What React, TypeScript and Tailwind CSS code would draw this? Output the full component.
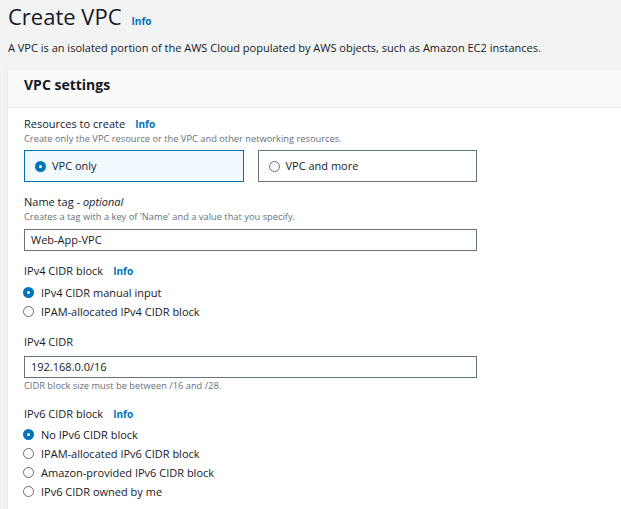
import React from "react";

const font = { fontFamily: '"Open Sans", "Noto Sans", Arial, sans-serif' };

function Info() {
  return <span className="ml-[10px] text-[10px] font-bold text-[#0073bb]">Info</span>;
}

function Radio({ checked }: { checked?: boolean }) {
  return checked ? (
    <span className="inline-block w-[11px] h-[11px] rounded-full border-[4px] border-[#0073bb] bg-white shrink-0" />
  ) : (
    <span className="inline-block w-[11px] h-[11px] rounded-full border border-[#687078] bg-white shrink-0" />
  );
}

function RadioRow({ label, checked }: { label: string; checked?: boolean }) {
  return (
    <div className="flex items-center h-[19px] ml-[-1px]">
      <Radio checked={checked} />
      <span className="ml-[7px] text-[11px] leading-[19px] text-[#16191f]">{label}</span>
    </div>
  );
}

export default function App() {
  return (
    <div style={font} className="w-[621px] h-[509px] overflow-hidden bg-[#f2f3f3] pl-[7px] text-[#16191f]">
      <div className="pl-[1px] pt-[1px] flex items-baseline">
        <h1 className="text-[22px] leading-[30px] font-normal">Create VPC</h1>
        <span className="ml-[10px] text-[10px] font-bold text-[#0073bb]">Info</span>
      </div>
      <p className="pl-[1px] mt-[9px] text-[11px] leading-[16px]">
        A VPC is an isolated portion of the AWS Cloud populated by AWS objects, such as Amazon EC2 instances.
      </p>
      <div className="mt-[13px] w-[700px] border border-[#eaeded] bg-white">
        <div className="h-[38px] bg-[#fafafa] border-b border-[#eaeded] pl-[16px] pt-[5px]">
          <h2 className="text-[14px] font-bold leading-[20px]">VPC settings</h2>
        </div>
        <div className="pl-[16px] pt-[8px] pb-[40px] w-[469px]">
          <div className="text-[11px] leading-[16px] flex items-baseline">
            Resources to create <Info />
          </div>
          <div className="text-[9.3px] leading-[14px] text-[#687078]">
            Create only the VPC resource or the VPC and other networking resources.
          </div>
          <div className="mt-[4px] grid grid-cols-2 gap-[14px]">
            <div className="h-[32px] border border-[#0073bb] bg-[#f1faff] flex items-center pl-[10px]">
              <Radio checked />
              <span className="ml-[6px] text-[11px]">VPC only</span>
            </div>
            <div className="h-[32px] border border-[#687078] bg-white flex items-center pl-[10px]">
              <Radio />
              <span className="ml-[6px] text-[11px]">VPC and more</span>
            </div>
          </div>

          <div className="mt-[12px] text-[11px] leading-[16px]">
            Name tag - <i>optional</i>
          </div>
          <div className="text-[9.3px] leading-[14px] text-[#687078]">
            Creates a tag with a key of 'Name' and a value that you specify.
          </div>
          <div className="mt-[5px] h-[22px] border border-[#687078] flex items-center pl-[6px] text-[11px]">
            Web-App-VPC
          </div>

          <div className="mt-[12px] text-[11px] leading-[16px] flex items-baseline">
            IPv4 CIDR block <Info />
          </div>
          <div className="mt-[4px]">
            <RadioRow label="IPv4 CIDR manual input" checked />
            <RadioRow label="IPAM-allocated IPv4 CIDR block" />
          </div>

          <div className="mt-[13px] text-[11px] leading-[16px]">IPv4 CIDR</div>
          <div className="mt-[6px] h-[22px] border border-[#687078] flex items-center pl-[6px] text-[11px]">
            192.168.0.0/16
          </div>
          <div className="mt-[1px] text-[9.3px] leading-[14px] text-[#687078]">
            CIDR block size must be between /16 and /28.
          </div>

          <div className="mt-[13px] text-[11px] leading-[16px] flex items-baseline">
            IPv6 CIDR block <Info />
          </div>
          <div className="mt-[3px]">
            <RadioRow label="No IPv6 CIDR block" checked />
            <RadioRow label="IPAM-allocated IPv6 CIDR block" />
            <RadioRow label="Amazon-provided IPv6 CIDR block" />
            <RadioRow label="IPv6 CIDR owned by me" />
          </div>
        </div>
      </div>
    </div>
  );
}
